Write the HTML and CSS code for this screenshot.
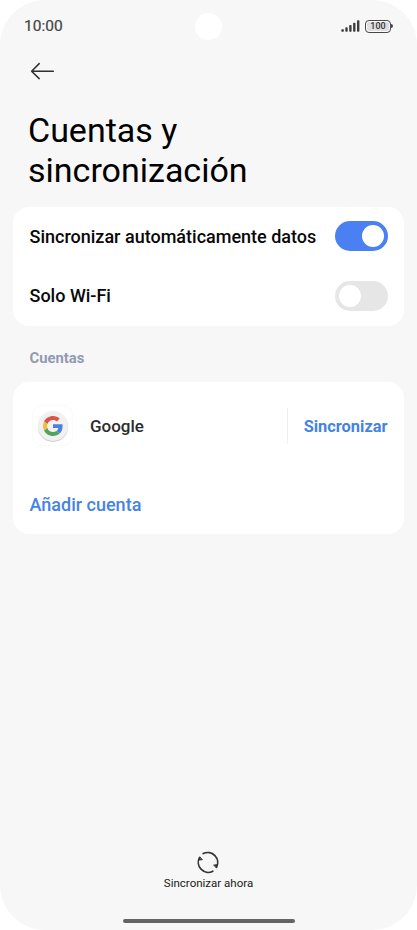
FILE: index.html
```html
<!DOCTYPE html>
<html lang="es">
<head>
<meta charset="utf-8">
<title>Cuentas y sincronización</title>
<link rel="stylesheet" href="styles.css">
</head>
<body>
<main class="phone">
  <div class="status">
    <span class="time">10:00</span>
    <span class="camera"></span>
    <span class="indicators">
      <svg class="signal" width="19" height="12" viewBox="0 0 19 12" fill="#3e3e40"><rect x="0.3" y="9.2" width="2.6" height="2.5" rx=".7"/><rect x="4.3" y="7.3" width="2.4" height="4.4" rx=".7"/><rect x="8.2" y="5.1" width="2.4" height="6.6" rx=".7"/><rect x="12.1" y="2.8" width="2.4" height="8.9" rx=".7"/><rect x="16" y=".2" width="2.4" height="11.5" rx=".7"/></svg>
      <span class="battery">100</span><span class="tip"></span>
    </span>
  </div>
  <nav class="nav">
    <svg width="26" height="18" viewBox="0 0 26 18" fill="none" stroke="#302e2e" stroke-width="1.5" stroke-linecap="round" stroke-linejoin="round"><path d="M23.3 9.2H1.6M9.2 1.6L1.6 9.2L9.2 16.6"/></svg>
  </nav>
  <h1 class="title">Cuentas y<br>sincronización</h1>
  <section class="card">
    <div class="row"><span class="label">Sincronizar automáticamente datos</span><span class="switch on"></span></div>
    <div class="row"><span class="label">Solo Wi-Fi</span><span class="switch"></span></div>
  </section>
  <h2 class="heading">Cuentas</h2>
  <section class="card accounts">
    <div class="account">
      <span class="tile">
        <span class="disc">
          <svg width="20" height="20" viewBox="0 0 48 48"><path fill="#d65745" d="M24 9.5c3.54 0 6.71 1.22 9.21 3.6l6.85-6.85C35.9 2.38 30.47 0 24 0 14.62 0 6.51 5.38 2.56 13.22l7.98 6.19C12.43 13.72 17.74 9.5 24 9.5z"/><path fill="#4a80de" d="M46.98 24.55c0-1.57-.15-3.09-.38-4.55H24v9.02h12.94c-.58 2.96-2.26 5.48-4.78 7.18l7.73 6c4.51-4.18 7.09-10.36 7.09-17.65z"/><path fill="#f2bc42" d="M10.53 28.59c-.48-1.45-.76-2.99-.76-4.59s.27-3.14.76-4.59l-7.98-6.19C.92 16.46 0 20.12 0 24s.92 7.54 2.56 10.78l7.97-6.19z"/><path fill="#52a45c" d="M24 48c6.48 0 11.93-2.13 15.89-5.81l-7.73-6c-2.15 1.45-4.92 2.3-8.16 2.3-6.26 0-11.57-4.22-13.47-9.91l-7.98 6.19C6.51 42.62 14.62 48 24 48z"/></svg>
        </span>
      </span>
      <span class="name">Google</span>
      <span class="sync">Sincronizar</span>
    </div>
    <div class="add"><span>Añadir cuenta</span></div>
  </section>
  <footer class="footer">
    <svg width="24" height="24" viewBox="0 0 24 24" fill="none" stroke="#343434" stroke-width="1.7" stroke-linecap="round" stroke-linejoin="round"><path d="M7.2 3.6A10 10 0 0 1 20.5 17.3M16.8 21.2A10 10 0 0 1 3.6 7.3"/><path d="M3.7 7.4L2.6 10L6 9.7ZM20.4 17.2L21.4 14.7L18 15.1Z" fill="#343434" stroke-width="1"/></svg>
    <span class="now">Sincronizar ahora</span>
    <span class="home"></span>
  </footer>
</main>
</body>
</html>
```
FILE: styles.css
```css
* { box-sizing: border-box; }
body { margin: 0; background: #fff; font-family: Roboto, sans-serif; color: #080808; }
.phone { width: 417px; height: 930px; padding: 0 13px; background: #f7f7f7; border-radius: 45px; display: flex; flex-direction: column; overflow: hidden; white-space: nowrap; }
.status { height: 52px; margin: 0 11px 0 11px; display: grid; grid-template-columns: 1fr 27px 1fr; align-items: center; }
.time { font-size: 15.5px; line-height: 20px; color: #434345; -webkit-text-stroke: .2px #434345; }
.camera { width: 27px; height: 27px; border-radius: 50%; background: #fff; margin-left: -.5px; }
.indicators { display: flex; justify-content: flex-end; align-items: center; }
.signal { margin-right: 5px; }
.battery { width: 26px; height: 13px; border: 1.5px solid #48484a; border-radius: 4px; box-shadow: inset 0 0 0 1px #fff; background: #dedee0; font-size: 9px; line-height: 11px; font-weight: 500; text-align: center; color: #363638; }
.tip { width: 2px; height: 4px; border-radius: 0 2px 2px 0; background: #48484a; }
.nav { height: 58px; padding: 10px 17px; }
.nav svg { display: block; }
.title { margin: 0; height: 96.5px; padding-left: 15px; font-size: 34px; line-height: 40px; font-weight: 400; color: #000; }
.card { flex: none; height: 119px; padding: 0 16.5px; border-radius: 16px; background: #fff; }
.row { height: 59.5px; display: flex; align-items: center; justify-content: space-between; }
.label { padding-top: 1.4px; font-size: 18px; line-height: 22px; font-weight: 500; }
.switch { width: 53px; height: 30px; padding: 4px; border-radius: 15px; background: #e6e6e6; display: flex; }
.switch::after { content: ""; width: 22px; height: 22px; border-radius: 50%; background: #fff; }
.switch.on { background: #4b80f3; justify-content: flex-end; }
.heading { margin: 0; height: 56.5px; padding: 21px 16.5px; font-size: 14.8px; line-height: 22px; font-weight: 700; color: #9299b3; }
.accounts { height: 152px; }
.account { height: 87px; display: flex; align-items: center; }
.tile { width: 41px; height: 41px; margin-left: 2.5px; border: 1px solid #fafafa; border-radius: 10px; display: grid; place-items: center; }
.disc { width: 30px; height: 30px; border-radius: 50%; background: #f1f1f1; box-shadow: 0 1px 1px #ccc; display: grid; place-items: center; }
.name { flex: 1; margin-left: 17px; font-size: 17px; font-weight: 500; color: #2c2c2c; }
.sync { height: 36px; padding-left: 16px; border-left: 1px solid #f0f0f0; font-size: 16.4px; line-height: 37px; font-weight: 700; color: #4583e2; }
.add { height: 65px; padding-top: 25px; font-size: 18px; line-height: 22px; font-weight: 500; color: #4583e2; }
.footer { margin: auto 1px 0 0; height: 80px; display: flex; flex-direction: column; align-items: center; }
.now { margin: 2px 0 0 1px; font-size: 11.5px; line-height: 14px; color: #191919; }
.home { width: 172px; height: 4px; margin: 29px 0 0 1px; border-radius: 2px; background: #656565; }
```
